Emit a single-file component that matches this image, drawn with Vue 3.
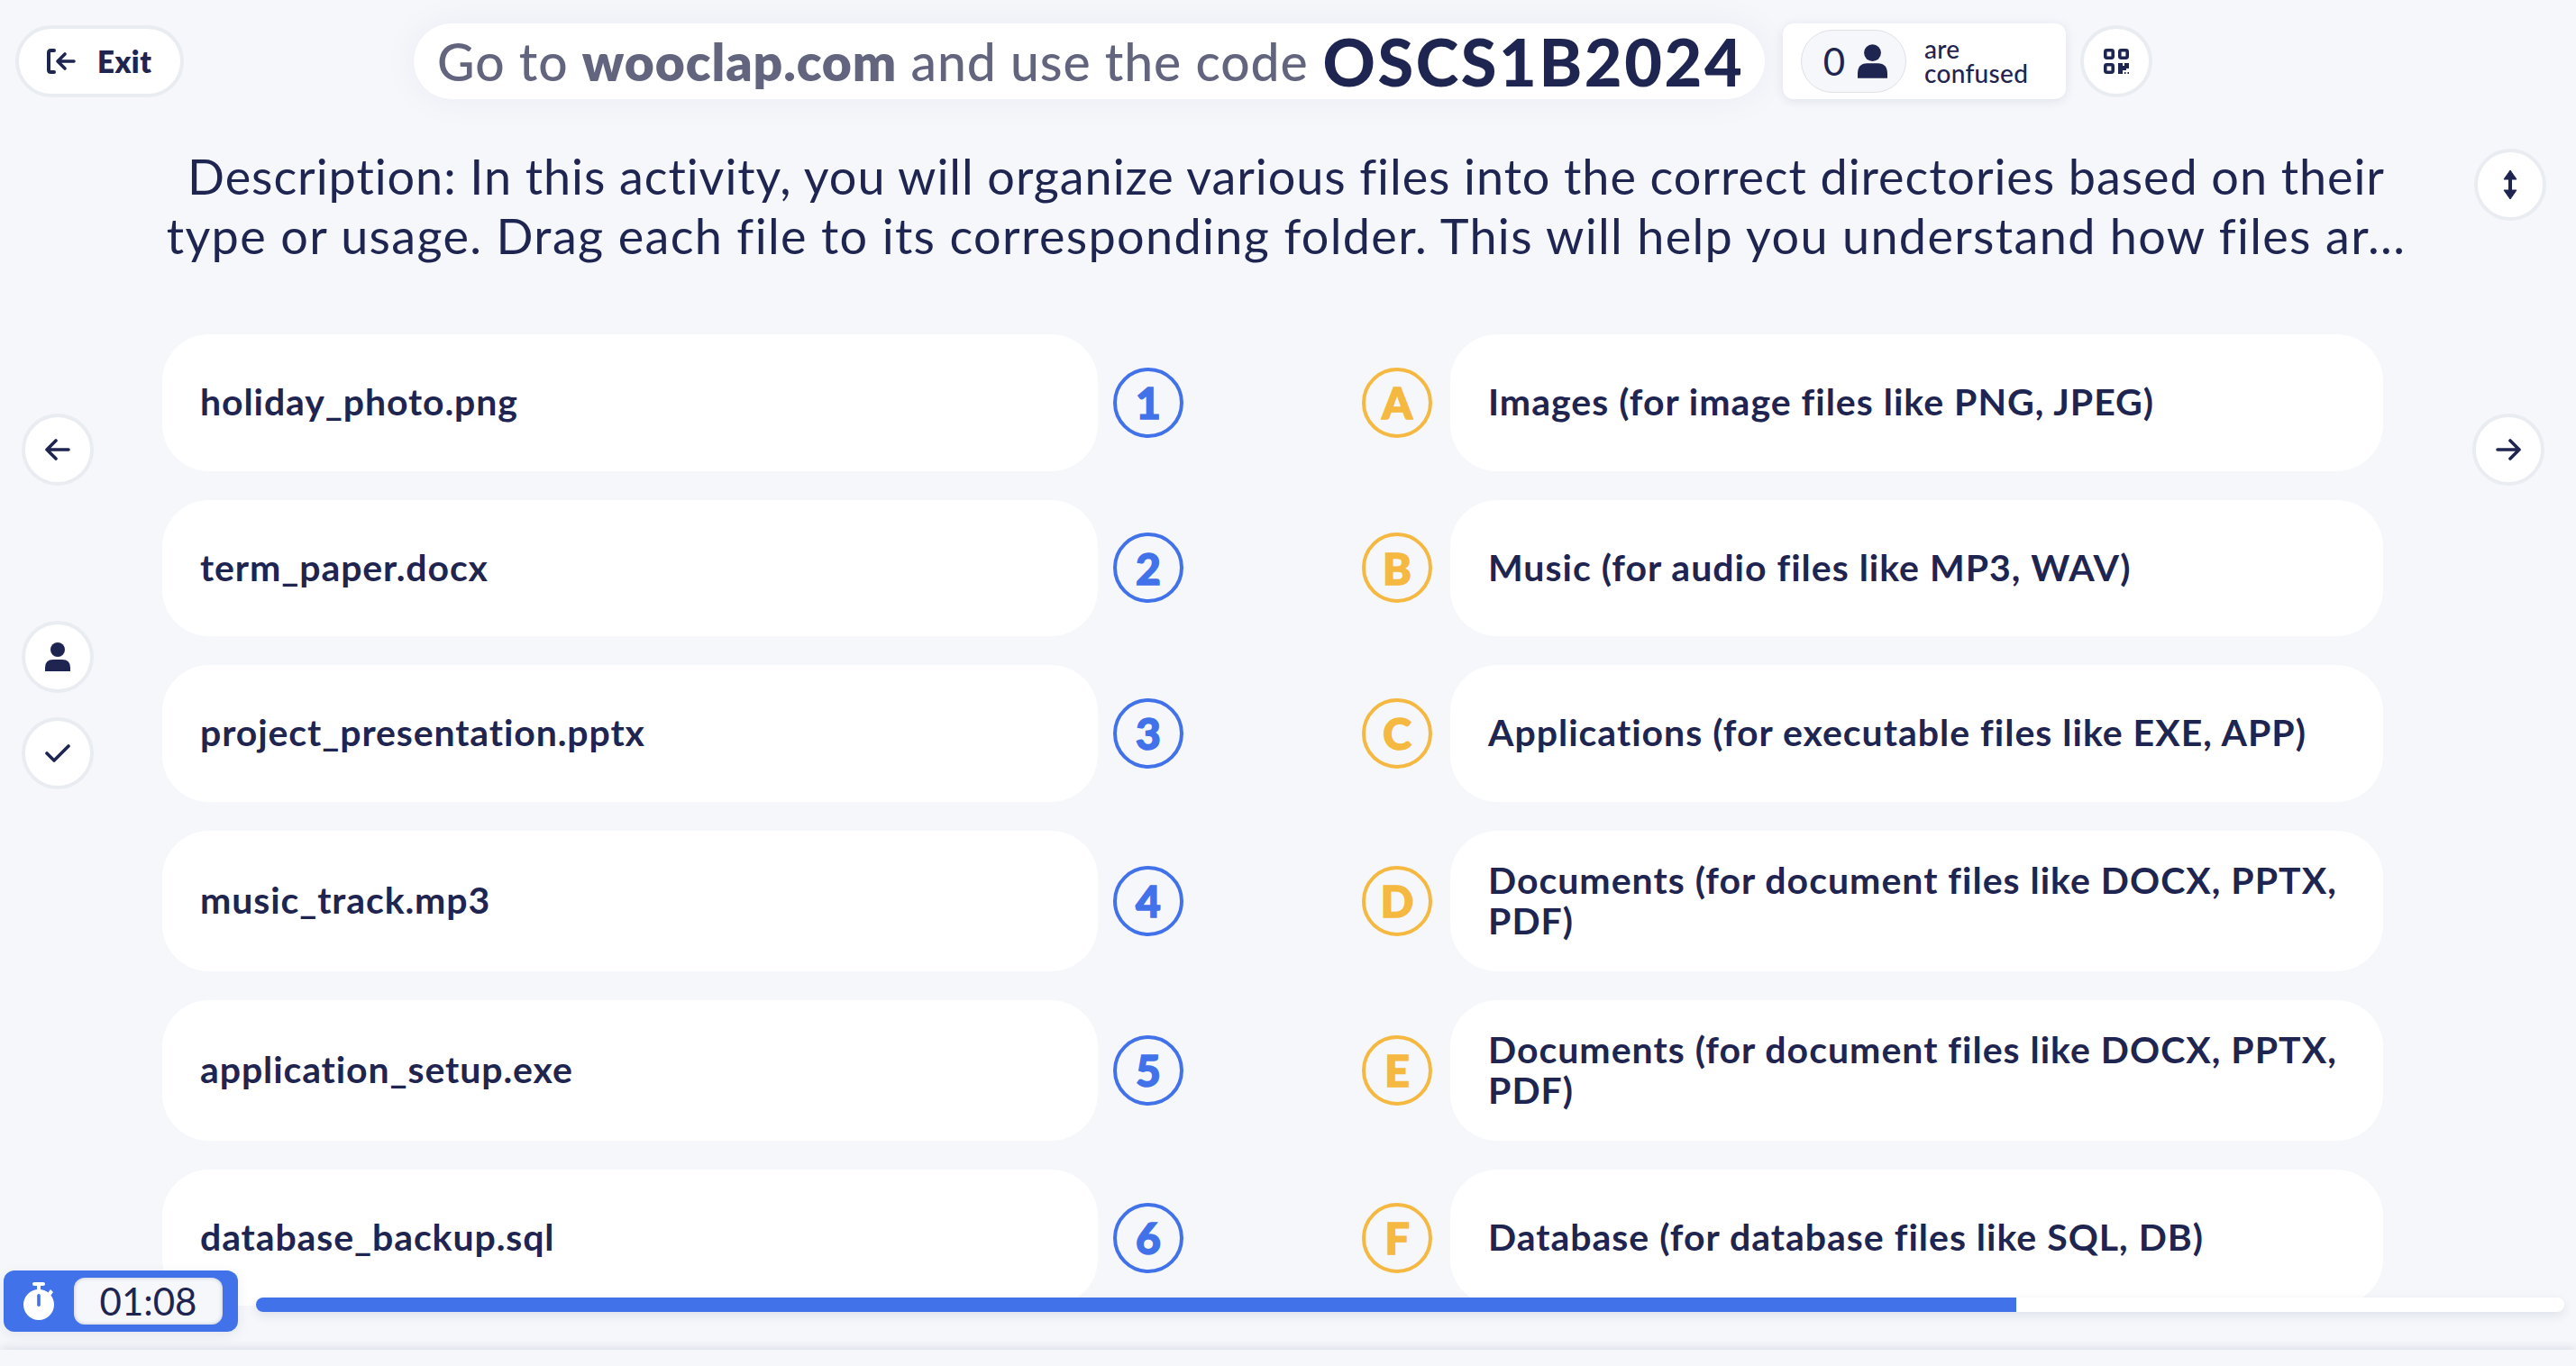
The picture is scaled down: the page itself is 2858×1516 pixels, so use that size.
<template>
  <div class="page">
    <header class="topbar">
      <button class="exit">
        <svg class="exit-icon" viewBox="0 0 32 28" width="32" height="28">
          <path d="M8 2H4.5Q2 2 2 4.5V23.5Q2 26 4.5 26H8" fill="none" stroke="#1f2551" stroke-width="4" stroke-linecap="round" />
          <path d="M30 14H13M20 6l-8 8 8 8" fill="none" stroke="#1f2551" stroke-width="3.6" stroke-linecap="round" stroke-linejoin="round" />
        </svg>
        <span>Exit</span>
      </button>
      <div class="join">
        <span class="join-text">Go to <b>wooclap.com</b> and use the code</span>
        <strong>OSCS1B2024</strong>
      </div>
      <div class="confused">
        <div class="count">
          <span>0</span>
          <svg viewBox="0 0 28 32" width="33" height="38"><circle cx="14" cy="8" r="8" fill="#1f2551" /><path d="M0 32V28Q0 18 9 18H19Q28 18 28 28V32Z" fill="#1f2551" /></svg>
        </div>
        <div class="confused-label">are<br />confused</div>
      </div>
      <button class="round qr">
        <svg viewBox="0 0 28 28" width="28" height="28">
          <rect x="1.8" y="1.8" width="8.4" height="8.4" rx="1.6" fill="none" stroke="#1f2551" stroke-width="3.6" />
          <rect x="17.8" y="1.8" width="8.4" height="8.4" rx="1.6" fill="none" stroke="#1f2551" stroke-width="3.6" />
          <rect x="1.8" y="17.8" width="8.4" height="8.4" rx="1.6" fill="none" stroke="#1f2551" stroke-width="3.6" />
          <path d="M16 16h5v3h2v-3h5v6h-3v2h-4v4h-5z" fill="#1f2551" />
          <path d="M23 26h1.5v2H23zM26.5 26H28v2h-1.5z" fill="#1f2551" />
        </svg>
      </button>
    </header>

    <section class="desc-row">
      <p class="desc">
        <span class="line-one">Description: In this activity, you will organize various files into the correct directories based on their</span>
        <span class="line-two">type or usage. Drag each file to its corresponding folder. This will help you understand how files ar...</span>
      </p>
      <button class="round expand">
        <svg viewBox="0 0 18 32" width="18" height="32">
          <path d="M9 0l7 10H2zM9 32L2 22h14z" fill="#1f2551" stroke="#1f2551" stroke-width="1" stroke-linejoin="round" />
          <rect x="7" y="8" width="4" height="16" fill="#1f2551" />
        </svg>
      </button>
    </section>

    <main class="content">
      <aside class="rail">
        <button class="round">
          <svg viewBox="0 0 28 24" width="28" height="24"><path d="M26 12H2M12 2L2 12l10 10" fill="none" stroke="#1f2551" stroke-width="3.6" stroke-linecap="round" stroke-linejoin="round" /></svg>
        </button>
        <button class="round person">
          <svg viewBox="0 0 28 32" width="28" height="32"><circle cx="14" cy="8" r="8" fill="#1f2551" /><path d="M0 32V28Q0 19 9 19H19Q28 19 28 28V32Z" fill="#1f2551" /></svg>
        </button>
        <button class="round">
          <svg viewBox="0 0 28 20" width="28" height="20"><path d="M2 10l8 8L26 2" fill="none" stroke="#1f2551" stroke-width="3.6" stroke-linecap="round" stroke-linejoin="round" /></svg>
        </button>
      </aside>

      <div class="rows">
        <div v-for="row in rows" :key="row.num" class="row">
          <div class="side">
            <div class="card left">{{ row.file }}</div>
            <span class="badge num">{{ row.num }}</span>
          </div>
          <div class="side right">
            <span class="badge letter">{{ row.letter }}</span>
            <div class="card">{{ row.target }}</div>
          </div>
        </div>
      </div>

      <aside class="rail right-rail">
        <button class="round">
          <svg viewBox="0 0 28 24" width="28" height="24"><path d="M2 12H26M16 2l10 10-10 10" fill="none" stroke="#1f2551" stroke-width="3.6" stroke-linecap="round" stroke-linejoin="round" /></svg>
        </button>
      </aside>
    </main>

    <div class="timer-bar">
      <div class="timer">
        <svg viewBox="0 0 36 42" width="36" height="42">
          <rect x="11" y="0" width="14" height="4" rx="2" fill="#fff" />
          <rect x="16" y="3" width="4" height="6" fill="#fff" />
          <path d="M31 8l3 3-3 4-3-3z" fill="#fff" />
          <circle cx="18" cy="25" r="17" fill="#fff" />
          <rect x="16.2" y="13" width="3.6" height="14" rx="1.8" fill="#4272ea" />
        </svg>
        <span class="time">01:08</span>
      </div>
      <div class="progress">
        <div class="progress-fill" :style="{ width: progress + '%' }"></div>
      </div>
    </div>

    <div class="footer"></div>
  </div>
</template>

<script setup>
const progress = 76.26

const rows = [
  { num: 1, letter: 'A', file: 'holiday_photo.png', target: 'Images (for image files like PNG, JPEG)' },
  { num: 2, letter: 'B', file: 'term_paper.docx', target: 'Music (for audio files like MP3, WAV)' },
  { num: 3, letter: 'C', file: 'project_presentation.pptx', target: 'Applications (for executable files like EXE, APP)' },
  { num: 4, letter: 'D', file: 'music_track.mp3', target: 'Documents (for document files like DOCX, PPTX, PDF)' },
  { num: 5, letter: 'E', file: 'application_setup.exe', target: 'Documents (for document files like DOCX, PPTX, PDF)' },
  { num: 6, letter: 'F', file: 'database_backup.sql', target: 'Database (for database files like SQL, DB)' }
]
</script>

<style>
html, body { margin: 0; background: #f5f7fb; }
</style>

<style scoped>
.page {
  position: relative;
  height: 1516px;
  overflow: hidden;
  background: #f5f7fb;
  color: #1f2551;
  font-family: Lato, "Noto Sans", sans-serif;
}

button {
  font-family: inherit;
  color: inherit;
  padding: 0;
  cursor: pointer;
}

.topbar {
  display: flex;
  align-items: center;
  height: 84px;
  padding: 26px 0 0 17px;
}

.exit {
  display: flex;
  align-items: center;
  gap: 24px;
  width: 187px;
  height: 80px;
  padding-left: 31px;
  box-sizing: border-box;
  background: #fff;
  border: 4px solid #e9ecf1;
  border-radius: 40px;
  font-size: 33px;
  font-weight: 800;
  letter-spacing: 0.5px;
}

.join {
  display: flex;
  align-items: center;
  gap: 16px;
  height: 84px;
  margin-left: 255px;
  padding: 0 26px;
  width: 1499px;
  box-sizing: border-box;
  white-space: nowrap;
  background: #fff;
  border-radius: 42px;
  box-shadow: 0 0 40px rgba(31, 37, 81, 0.05);
  color: #63657f;
  font-size: 57px;
  font-weight: 500;
  letter-spacing: 0.9px;
}

.join b {
  font-weight: 800;
}

.join strong {
  color: #1f2551;
  font-size: 72px;
  font-weight: 900;
  letter-spacing: 2.6px;
}

.confused {
  display: flex;
  align-items: center;
  gap: 20px;
  width: 314px;
  height: 84px;
  margin-left: 20px;
  padding-left: 20px;
  box-sizing: border-box;
  background: #fff;
  border-radius: 12px;
  box-shadow: 0 2px 12px rgba(31, 37, 81, 0.1);
}

.count {
  display: flex;
  align-items: center;
  justify-content: center;
  gap: 14px;
  width: 117px;
  height: 70px;
  padding-left: 4px;
  box-sizing: border-box;
  background: #f5f7fb;
  border: 1px solid #dfe1e8;
  border-radius: 35px;
  font-size: 42px;
}

.confused-label {
  font-size: 28px;
  line-height: 27px;
  font-weight: 500;
  letter-spacing: 0.3px;
}

.round {
  display: flex;
  align-items: center;
  justify-content: center;
  flex-shrink: 0;
  width: 80px;
  height: 80px;
  box-sizing: border-box;
  background: #fff;
  border: 4px solid #e9ecf1;
  border-radius: 50%;
}

.qr {
  margin-left: 16px;
}

.desc-row {
  display: flex;
  align-items: flex-start;
  margin-top: 53px;
  padding-left: 178px;
}

.desc {
  width: 2498px;
  margin: 0;
  text-align: center;
  font-size: 54px;
  line-height: 66px;
  font-weight: 400;
  white-space: nowrap;
}

.line-one,
.line-two {
  display: block;
}

.line-one {
  letter-spacing: 0.92px;
}

.line-two {
  letter-spacing: 1.33px;
}

.expand {
  margin: 2px 0 0 69px;
}

.content {
  display: flex;
  margin-top: 76px;
  padding-left: 24px;
}

.rail {
  display: flex;
  flex-direction: column;
  gap: 27px;
  width: 156px;
  flex-shrink: 0;
  padding-top: 88px;
}

.person {
  margin-top: 123px;
}

.right-rail {
  width: auto;
  margin-left: 99px;
}

.rows {
  display: flex;
  flex-direction: column;
  gap: 32px;
  width: 2464px;
  flex-shrink: 0;
}

.row {
  display: flex;
  justify-content: space-between;
  min-height: 151.6px;
}

.side {
  display: flex;
  align-items: center;
  gap: 17px;
}

.side.right {
  gap: 20px;
}

.card {
  display: flex;
  align-items: center;
  align-self: stretch;
  width: 1035px;
  padding: 32px 42px 34px;
  box-sizing: border-box;
  background: #fff;
  border-radius: 52px;
  font-size: 41px;
  line-height: 45px;
  font-weight: 700;
  letter-spacing: 1px;
}

.card.left {
  width: 1038px;
  letter-spacing: 0.9px;
}

.badge {
  display: flex;
  align-items: center;
  justify-content: center;
  width: 78px;
  height: 78px;
  box-sizing: border-box;
  border: 4px solid;
  border-radius: 50%;
  font-size: 48px;
  font-weight: 900;
  -webkit-text-stroke: 1.5px currentColor;
}

.num {
  color: #4272ea;
}

.letter {
  color: #f5b840;
}

.timer-bar {
  position: absolute;
  left: 4px;
  right: 13px;
  top: 1410px;
  display: flex;
  align-items: flex-start;
  gap: 20px;
}

.timer {
  display: flex;
  align-items: center;
  gap: 21px;
  width: 260px;
  height: 68px;
  padding-left: 21px;
  box-sizing: border-box;
  background: #4272ea;
  border-radius: 12px;
  box-shadow: 0 4px 14px rgba(31, 37, 81, 0.08);
}

.time {
  display: flex;
  align-items: center;
  justify-content: center;
  width: 165px;
  height: 52px;
  background: #f5f7fb;
  border-radius: 12px;
  box-shadow: inset 0 0 4px rgba(31, 37, 81, 0.25);
  font-size: 42px;
}

.progress {
  flex: 1;
  height: 16px;
  margin-top: 30px;
  overflow: hidden;
  background: #fff;
  border-radius: 8px;
  box-shadow: 0 4px 12px rgba(31, 37, 81, 0.1);
}

.progress-fill {
  height: 100%;
  background: #4272ea;
}

.footer {
  position: absolute;
  left: 0;
  right: 0;
  top: 1498px;
  height: 18px;
  background: #f5f7fb;
  box-shadow: 0 -3px 10px rgba(31, 37, 81, 0.1);
}
</style>
